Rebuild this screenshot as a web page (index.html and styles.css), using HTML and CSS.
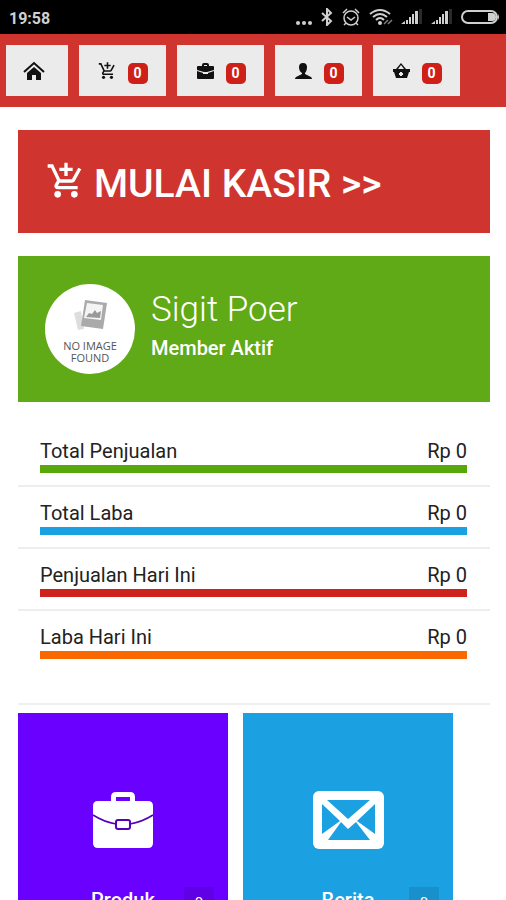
FILE: index.html
```html
<!DOCTYPE html>
<html lang="id">
<head>
<meta charset="UTF-8" />
<meta name="viewport" content="width=device-width, initial-scale=1" />
<title>Kasir</title>
<link rel="stylesheet" href="styles.css">
</head>
<body>

<svg class="sprite" aria-hidden="true">
  <symbol id="cart" viewBox="0 0 24 24">
    <path d="M11 9h2V6h3V4h-3V1h-2v3H8v2h3v3z"/>
    <circle cx="7" cy="20" r="2"/>
    <circle cx="17" cy="20" r="2"/>
    <path d="M7.170 14.750l.03-.12.9-1.630h7.450c.75 0 1.410-.41 1.750-1.030l3.860-7.010L19.420 4h-.01l-1.100 2-2.760 5H8.530l-.13-.27L6.160 6l-.95-2-.94-2H1v2h2l3.600 7.590-1.350 2.450c-.16.28-.25.61-.25.96 0 1.100.9 2 2 2h12v-2H7.420c-.13 0-.25-.11-.25-.25z"/>
  </symbol>
  <symbol id="signal" viewBox="0 0 22 16">
    <path d="M0 15l4-3v3zM5 11h2v4H5zM8 8h2v7H8zM11 5h2v10h-2zM14 2h3v13h-3z"/>
    <path d="M18 0h3v15h-3z" opacity=".2"/>
  </symbol>
</svg>

<div class="page">
  <div class="statusbar">
    <span class="time">19:58</span>
    <div class="status-icons">
      <svg width="18" height="18" viewBox="0 0 18 18"><circle cx="3" cy="15" r="2"/><circle cx="9" cy="15" r="2"/><circle cx="15" cy="15" r="2"/></svg>
      <svg width="12" height="18" viewBox="0 0 12 18"><path class="line wide" d="M1 5l9 8-4 4V1l4 4-9 8"/></svg>
      <svg width="20" height="18" viewBox="0 0 20 18"><g class="line"><circle cx="10" cy="10" r="7"/><path d="M6 9l4 3 4-3M2 5l4-4M18 5l-4-4M5 15l-2 2M15 15l2 2"/></g></svg>
      <svg width="24" height="18" viewBox="0 0 24 18"><g class="line wide"><path d="M1 6q10-8 20 0M4 9q7-6 14 0M7 12q4-4 8 0"/></g><circle cx="11" cy="15" r="2"/><path class="line" d="M15 16l4-4M19 16l4-4" opacity=".6"/></svg>
      <svg width="22" height="16"><use href="#signal"/></svg>
      <svg width="22" height="16"><use href="#signal"/></svg>
      <svg width="39" height="16" viewBox="0 0 39 16"><rect class="line wide" x="1" y="2" width="35" height="12" rx="6"/><path d="M27 4h4a4 4 0 0 1 0 8h-4zM37 5q2 3 0 6z"/></svg>
    </div>
  </div>

  <nav class="navbar">
    <button class="home" aria-label="Home">
      <svg width="22" height="20" viewBox="0 0 22 20"><path d="M11 6l7 6v7h-5v-5H9v5H4v-7z"/><path d="M1 11L11 2l10 9" fill="none" stroke="currentColor" stroke-width="2"/></svg>
    </button>
    <button aria-label="Keranjang">
      <svg width="19" height="20" fill="#444"><use href="#cart"/></svg>
      <span class="badge">0</span>
    </button>
    <button aria-label="Produk">
      <svg width="19" height="20" viewBox="0 0 19 20"><path d="M6 5V4q0-2 2-2h3q2 0 2 2v1h4q1 0 1 1v3l-7 2H8L1 9V6q0-1 1-1zm2 0h3V4H8zM1 10l6 2v1h5v-1l6-2v7q0 1-1 1H2q-1 0-1-1z"/></svg>
      <span class="badge">0</span>
    </button>
    <button aria-label="Pelanggan">
      <svg width="19" height="20" viewBox="0 0 19 20"><path d="M9 2c3 0 4 2 4 4 0 3-1 5-2 6v1l6 3q1 1 1 2H1q0-1 1-2l6-3v-1C6 11 5 9 5 6c0-2 1-4 4-4z"/></svg>
      <span class="badge">0</span>
    </button>
    <button aria-label="Belanja">
      <svg width="19" height="20" viewBox="0 0 19 20"><path d="M4 8l5-6 5 6h4v3h-1l-2 6H4l-2-6H1V8zm2 0h6L9 4zm2 3v1H7v2h1v1h2v-1h1v-2h-1v-1z" fill-rule="evenodd"/></svg>
      <span class="badge">0</span>
    </button>
  </nav>

  <main class="content">
    <a href="#" class="start">
      <svg width="40" height="40"><use href="#cart"/></svg>
      <span>MULAI KASIR &gt;&gt;</span>
    </a>

    <section class="profile">
      <svg class="avatar" viewBox="0 0 90 90" role="img" aria-label="No image found">
        <circle cx="45" cy="45" r="45" fill="#fff"/>
        <path d="M29 29l7-2 3 18-6 1z" fill="#ddd"/>
        <path d="M40 16l22 3-4 26-22-3z" fill="#aaa"/>
        <path d="M42 19l16 2-2 15-17-2z" fill="#f4f4f4"/>
        <path d="M41 33l3-4 3 1 3-4 2 3 4-2-1 7z" fill="#999"/>
        <text x="45" y="66">NO IMAGE</text>
        <text x="45" y="78">FOUND</text>
      </svg>
      <div class="member">
        <h1>Sigit Poer</h1>
        <p>Member Aktif</p>
      </div>
    </section>

    <ul class="totals">
      <li><span>Total Penjualan</span><span>Rp 0</span><div class="bar green"></div></li>
      <li><span>Total Laba</span><span>Rp 0</span><div class="bar blue"></div></li>
      <li><span>Penjualan Hari Ini</span><span>Rp 0</span><div class="bar red"></div></li>
      <li><span>Laba Hari Ini</span><span>Rp 0</span><div class="bar orange"></div></li>
    </ul>

    <div class="tiles">
      <a href="#" class="tile purple">
        <svg width="60" height="56" viewBox="0 0 60 56"><path d="M18 9V5q0-5 5-5h14q5 0 5 5v4h13q5 0 5 5v37q0 5-5 5H5q-5 0-5-5V14q0-5 5-5zm5 0h14V5H23z" fill-rule="evenodd"/><path d="M0 23q11 7 23 9M60 23q-11 7-23 9" fill="none" stroke="#50b" stroke-width="1.500"/><rect x="23" y="28" width="14" height="9" rx="2" stroke="#50b" stroke-width="2"/></svg>
        <span class="label">Produk</span>
        <span class="count">0</span>
      </a>
      <a href="#" class="tile blue">
        <svg width="71" height="58" viewBox="0 0 71 58"><rect width="71" height="58" rx="6"/><path class="cut" d="M9 13l18 17L9 43zM62 13L44 30l18 13zM14 9h43L35 28zM28 31l7 7 8-7 14 18H15z"/></svg>
        <span class="label">Berita</span>
        <span class="count">0</span>
      </a>
    </div>
  </main>
</div>

</body>
</html>
```
FILE: styles.css
```css
* {
  box-sizing: border-box;
}
body {
  margin: 0;
  font-family: Roboto, sans-serif;
  color: #222;
  background: #fff;
}
.page {
  height: 100vh;
  overflow: hidden;
}
.sprite {
  display: none;
}
svg {
  flex: none;
  fill: currentColor;
}
.statusbar {
  display: flex;
  justify-content: space-between;
  align-items: center;
  height: 34px;
  padding: 0 6px 0 9px;
  background: #000;
  color: #d0d0d0;
}
.time {
  padding-top: 2px;
  font-size: 16px;
  font-weight: bold;
}
.status-icons {
  display: flex;
  align-items: center;
  gap: 8px;
}
.line {
  fill: none;
  stroke: currentColor;
  stroke-width: 1.5;
}
.line.wide {
  stroke-width: 2;
}
.navbar {
  display: flex;
  gap: 11px;
  padding: 11px 6px;
  background: #cf352e;
}
.navbar button {
  display: flex;
  align-items: center;
  justify-content: center;
  gap: 11px;
  width: 87px;
  height: 51px;
  padding: 0;
  border: none;
  background: #ebebeb;
  color: #111;
  font-family: inherit;
  cursor: pointer;
}
.navbar .home {
  width: 62px;
  padding-right: 6px;
}
.badge {
  width: 20px;
  margin-top: 6px;
  border-radius: 5px;
  background: #ce1f18;
  color: #fff;
  font-size: 14px;
  font-weight: bold;
  line-height: 21px;
  text-align: center;
}
.content {
  padding: 23px 16px 0 18px;
}
.start {
  display: flex;
  align-items: center;
  gap: 8px;
  height: 103px;
  padding: 0 28px;
  background: #cf352e;
  color: #fff;
  font-size: 39px;
  font-weight: 500;
  text-decoration: none;
}
.start svg {
  margin-bottom: 2px;
}
.start span {
  padding-top: 4px;
}
.profile {
  display: flex;
  align-items: center;
  gap: 16px;
  height: 146px;
  margin-top: 23px;
  padding: 0 27px;
  background: #60a917;
  color: #fff;
}
.avatar {
  width: 90px;
  height: 90px;
}
.avatar text {
  font-family: "Open Sans", sans-serif;
  font-size: 11px;
  fill: #555;
  text-anchor: middle;
}
.member {
  padding-bottom: 7px;
}
.profile h1 {
  margin: 0;
  font-size: 35px;
  font-weight: 300;
  line-height: 44px;
}
.profile p {
  margin: 0;
  font-size: 20px;
  font-weight: 500;
  line-height: 32px;
}
.totals {
  margin: 23px 0 0;
  padding: 0 0 32px;
  list-style: none;
  border-bottom: 2px solid #f0f0f0;
}
.totals li {
  display: flex;
  flex-wrap: wrap;
  justify-content: space-between;
  padding: 14px 23px 12px 22px;
  font-size: 20px;
  line-height: 24px;
  border-bottom: 2px solid #eee;
}
.totals li:last-child {
  border-bottom: none;
}
.bar {
  width: 100%;
  height: 8px;
  margin-top: 2px;
}
.green {
  background: #59a80b;
}
.blue {
  background: #1ba1e2;
}
.red {
  background: #ce231c;
}
.orange {
  background: #fa6800;
}
.purple {
  background: #6a00ff;
}
.tiles {
  display: flex;
  gap: 15px;
  margin-top: 8px;
}
.tile {
  position: relative;
  display: flex;
  align-items: center;
  justify-content: center;
  width: 210px;
  height: 214px;
  color: #fff;
  text-decoration: none;
}
.cut {
  fill: #1ba1e2;
}
.label {
  position: absolute;
  right: 0;
  bottom: 14px;
  left: 0;
  font-size: 20px;
  font-weight: 500;
  line-height: 26px;
  text-align: center;
}
.count {
  position: absolute;
  right: 14px;
  bottom: 8px;
  width: 30px;
  background: rgba(0, 0, 0, 0.1);
  font-size: 15px;
  line-height: 32px;
  text-align: center;
}
```
